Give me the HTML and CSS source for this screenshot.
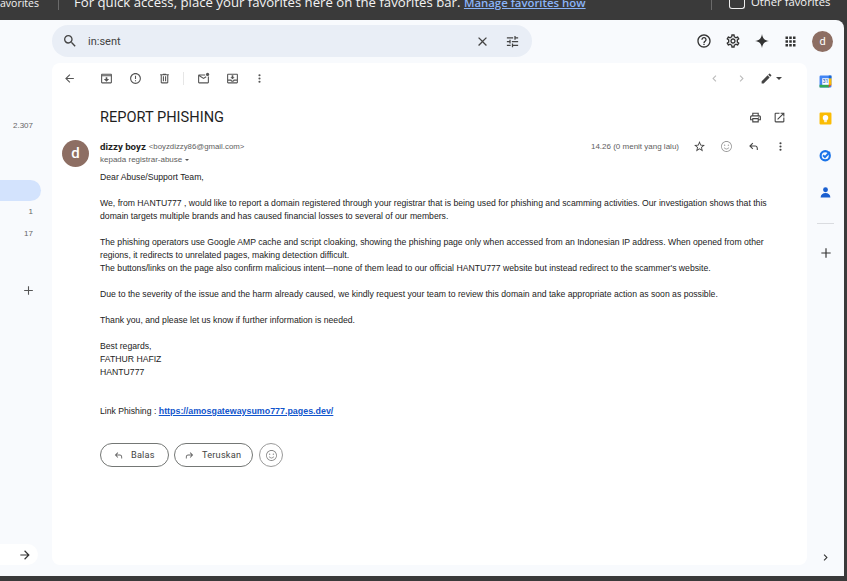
FILE: index.html
```html
<!DOCTYPE html>
<html>
	<head>
		<meta charset="utf-8">
		<title>REPORT PHISHING</title>
		<link rel="stylesheet" href="styles.css">
	</head>
	<body>
		<svg class="defs" width="0" height="0">
			<symbol id="i-search" viewBox="0 0 24 24"><path d="M15.5 14h-.79l-.28-.27A6.471 6.471 0 0 0 16 9.5 6.5 6.5 0 1 0 9.5 16c1.61 0 3.09-.59 4.23-1.57l.27.28v.79l5 4.99L20.49 19l-4.99-5zm-6 0C7.01 14 5 11.99 5 9.5S7.01 5 9.5 5 14 7.01 14 9.5 11.99 14 9.5 14z"/></symbol>
			<symbol id="i-close" viewBox="0 0 24 24"><path d="M19 6.41L17.59 5 12 10.59 6.41 5 5 6.41 10.59 12 5 17.59 6.41 19 12 13.41 17.59 19 19 17.59 13.41 12z"/></symbol>
			<symbol id="i-tune" viewBox="0 0 24 24"><path d="M3 17v2h6v-2H3zM3 5v2h10V5H3zm10 16v-2h8v-2h-8v-2h-2v6h2zM7 9v2H3v2h4v2h2V9H7zm14 4v-2H11v2h10zm-6-4h2V7h4V5h-4V3h-2v6z"/></symbol>
			<symbol id="i-help" viewBox="0 0 24 24"><path d="M11 18h2v-2h-2v2zm1-16C6.48 2 2 6.48 2 12s4.48 10 10 10 10-4.48 10-10S17.52 2 12 2zm0 18c-4.41 0-8-3.59-8-8s3.59-8 8-8 8 3.59 8 8-3.59 8-8 8zm0-14c-2.21 0-4 1.79-4 4h2c0-1.1.9-2 2-2s2 .9 2 2c0 2-3 1.75-3 5h2c0-2.25 3-2.5 3-5 0-2.21-1.79-4-4-4z"/></symbol>
			<symbol id="i-gear" viewBox="0 0 24 24"><path fill-rule="evenodd" d="M19.43 12.98c.04-.32.07-.64.07-.98s-.03-.66-.07-.98l2.11-1.65c.19-.15.24-.42.12-.64l-2-3.46c-.12-.22-.39-.3-.61-.22l-2.49 1c-.52-.4-1.08-.73-1.69-.98l-.38-2.65A.49.49 0 0 0 14 2h-4c-.25 0-.46.18-.49.42l-.38 2.65c-.61.25-1.17.59-1.69.98l-2.49-1c-.23-.09-.49 0-.61.22l-2 3.46c-.13.22-.07.49.12.64l2.11 1.65c-.04.32-.07.65-.07.98s.03.66.07.98l-2.11 1.65c-.19.15-.24.42-.12.64l2 3.46c.12.22.39.3.61.22l2.49-1c.52.4 1.08.73 1.69.98l.38 2.65c.03.24.24.42.49.42h4c.25 0 .46-.18.49-.42l.38-2.65c.61-.25 1.17-.59 1.69-.98l2.49 1c.23.09.49 0 .61-.22l2-3.46c.12-.22.07-.49-.12-.64l-2.11-1.65zM17.45 11.27c.04.31.05.52.05.73s-.02.43-.05.73l-.14 1.13.89.7 1.08.84-.7 1.21-1.27-.51-1.04-.42-.9.68c-.43.32-.84.56-1.25.73l-1.06.43-.16 1.13-.2 1.35h-1.4l-.19-1.35-.16-1.13-1.06-.43c-.43-.18-.83-.41-1.23-.71l-.91-.7-1.06.43-1.27.51-.7-1.21 1.08-.84.89-.7-.14-1.13c-.03-.31-.05-.54-.05-.74s.02-.43.05-.73l.14-1.13-.89-.7-1.08-.84.7-1.21 1.27.51 1.04.42.9-.68c.43-.32.84-.56 1.25-.73l1.06-.43.16-1.13.2-1.35h1.39l.19 1.35.16 1.13 1.06.43c.43.18.83.41 1.23.71l.91.7 1.06-.43 1.27-.51.7 1.21-1.07.85-.89.7.14 1.13zM12 8c-2.21 0-4 1.79-4 4s1.79 4 4 4 4-1.79 4-4-1.79-4-4-4zm0 6c-1.1 0-2-.9-2-2s.9-2 2-2 2 .9 2 2-.9 2-2 2z"/></symbol>
			<symbol id="i-spark" viewBox="0 0 24 24"><path d="M12 1.5C12.9 8 16 11.1 22.5 12 16 12.9 12.9 16 12 22.5 11.1 16 8 12.9 1.5 12 8 11.1 11.1 8 12 1.5z"/></symbol>
			<symbol id="i-apps" viewBox="0 0 24 24"><path d="M4 4h4v4H4zM10 4h4v4h-4zM16 4h4v4h-4zM4 10h4v4H4zM10 10h4v4h-4zM16 10h4v4h-4zM4 16h4v4H4zM10 16h4v4h-4zM16 16h4v4h-4z"/></symbol>
			<symbol id="i-back" viewBox="0 0 24 24"><path d="M20 11H7.83l5.59-5.59L12 4l-8 8 8 8 1.41-1.41L7.83 13H20v-2z"/></symbol>
			<symbol id="i-forward" viewBox="0 0 24 24"><path d="M4 11h12.17l-5.59-5.59L12 4l8 8-8 8-1.41-1.41L16.17 13H4v-2z"/></symbol>
			<symbol id="i-archive" viewBox="0 0 24 24"><path d="M20 3H4c-1.1 0-2 .9-2 2v14c0 1.1.9 2 2 2h16c1.1 0 2-.9 2-2V5c0-1.100-.9-2-2-2zm0 16H4V8h16v11zM4 6V5h16v1H4zm8 12l5-5h-3.500V9.500h-3V13H7l5 5z"/></symbol>
			<symbol id="i-report" viewBox="0 0 24 24"><path d="M12 2C6.480 2 2 6.480 2 12s4.480 10 10 10 10-4.480 10-10S17.520 2 12 2zm0 18c-4.410 0-8-3.590-8-8s3.590-8 8-8 8 3.590 8 8-3.590 8-8 8zm-1-5h2v2h-2v-2zm0-8h2v6h-2V7z"/></symbol>
			<symbol id="i-trash" viewBox="0 0 24 24"><path d="M15 4V3H9v1H4v2h1v13c0 1.100.9 2 2 2h10c1.100 0 2-.9 2-2V6h1V4h-5zm2 15H7V6h10v13zM9 8h2v9H9V8zm4 0h2v9h-2V8z"/></symbol>
			<symbol id="i-mail" viewBox="0 0 24 24"><path d="M20 8.500V19H4V8l8 5 5.500-3.400-1-1.700L12 10.700 5.500 6.500H15v-2H4c-1.100 0-2 .9-2 2v12.500c0 1.100.9 2 2 2h16c1.100 0 2-.9 2-2V8.500h-2z"/><circle cx="19.500" cy="4.500" r="3"/></symbol>
			<symbol id="i-move" viewBox="0 0 24 24"><path d="M20 3H4c-1.100 0-2 .9-2 2v14c0 1.100.9 2 2 2h16c1.100 0 2-.9 2-2V5c0-1.100-.9-2-2-2zm0 16H4v-3h4.500c.7 1.200 2 2 3.500 2s2.800-.8 3.500-2H20v3zm0-5h-6c0 1.100-.9 2-2 2s-2-.9-2-2H4V5h16v9zm-8-.5l4-4h-2.500V6h-3v3.500H8l4 4z"/></symbol>
			<symbol id="i-dots" viewBox="0 0 24 24"><path d="M12 8a2 2 0 1 0 0-4 2 2 0 0 0 0 4zm0 2a2 2 0 1 0 0 4 2 2 0 0 0 0-4zm0 6a2 2 0 1 0 0 4 2 2 0 0 0 0-4z"/></symbol>
			<symbol id="i-left" viewBox="0 0 24 24"><path d="M15.410 7.410L14 6l-6 6 6 6 1.410-1.410L10.830 12z"/></symbol>
			<symbol id="i-right" viewBox="0 0 24 24"><path d="M8.590 16.590L10 18l6-6-6-6-1.410 1.410L13.170 12z"/></symbol>
			<symbol id="i-pencil" viewBox="0 0 24 24"><path d="M3 17.250V21h3.750L17.810 9.940l-3.750-3.750L3 17.250zM20.710 7.040a1 1 0 0 0 0-1.410l-2.340-2.340a1 1 0 0 0-1.410 0l-1.830 1.830 3.750 3.750 1.830-1.830z"/></symbol>
			<symbol id="i-print" viewBox="0 0 24 24"><path d="M19 8h-1V3H6v5H5c-1.660 0-3 1.340-3 3v6h4v4h12v-4h4v-6c0-1.660-1.340-3-3-3zM8 5h8v3H8V5zm8 14H8v-4h8v4zm4-4h-2v-2H6v2H4v-4c0-.55.45-1 1-1h14c.55 0 1 .45 1 1v4z"/><circle cx="18" cy="11.500" r="1"/></symbol>
			<symbol id="i-open" viewBox="0 0 24 24"><path d="M19 19H5V5h7V3H5a2 2 0 0 0-2 2v14a2 2 0 0 0 2 2h14c1.100 0 2-.9 2-2v-7h-2v7zM14 3v2h3.590l-9.830 9.830 1.410 1.410L19 6.410V10h2V3h-7z"/></symbol>
			<symbol id="i-star" viewBox="0 0 24 24"><path d="M22 9.240l-7.190-.62L12 2 9.190 8.630 2 9.240l5.460 4.730L5.820 21 12 17.270 18.180 21l-1.630-7.030L22 9.240zM12 15.400l-3.760 2.270 1-4.280-3.320-2.880 4.380-.38L12 6.100l1.710 4.040 4.380.38-3.320 2.880 1 4.280L12 15.400z"/></symbol>
			<symbol id="i-smile" viewBox="0 0 24 24"><path d="M12 2C6.480 2 2 6.480 2 12s4.480 10 10 10 10-4.480 10-10S17.520 2 12 2zm0 18.500c-4.690 0-8.500-3.810-8.500-8.500S7.310 3.500 12 3.500s8.500 3.810 8.500 8.500-3.810 8.500-8.500 8.500z"/><circle cx="8.500" cy="9.500" r="1.300"/><circle cx="15.500" cy="9.500" r="1.300"/><path d="M7 14h1.600c.6 1.300 1.900 2.200 3.400 2.200s2.800-.9 3.400-2.200H17c-.7 2.100-2.700 3.500-5 3.500S7.700 16.100 7 14z"/></symbol>
			<symbol id="i-reply" viewBox="0 0 24 24"><path d="M20 18.500h-2V15c0-1.700-1.300-3-3-3H7.830l3.580 3.590L10 17l-6-6 6-6 1.410 1.410L7.830 10H15c2.800 0 5 2.200 5 5v3.500z"/></symbol>
			<symbol id="i-fwd" viewBox="0 0 24 24"><path d="M4 18.500h2V15c0-1.700 1.300-3 3-3h7.170l-3.580 3.590L14 17l6-6-6-6-1.410 1.410L16.170 10H9c-2.800 0-5 2.200-5 5v3.500z"/></symbol>
			<symbol id="i-plus" viewBox="0 0 24 24"><path d="M20 13h-7v7h-2v-7H4v-2h7V4h2v7h7v2z"/></symbol>
		</svg>

		<div class="favbar">
			<span class="fav-cut">avorites</span>
			<span class="fav-sep"></span>
			<span class="fav-msg">For quick access, place your favorites here on the favorites bar. <a href="#">Manage favorites how</a></span>
			<span class="fav-sep"></span>
			<span class="fav-box"></span>
			<span class="fav-other">Other favorites</span>
		</div>

		<div class="window">
			<div class="side">
				<div class="count count-sent">2.307</div>
				<div class="side-pill"></div>
				<div class="count count-one">1</div>
				<div class="count count-two">17</div>
				<svg class="side-plus"><use href="#i-plus"/></svg>
				<div class="side-next"><svg><use href="#i-forward"/></svg></div>
			</div>

			<div class="center">
				<div class="topbar">
					<div class="search">
						<svg class="search-icon"><use href="#i-search"/></svg>
						<span class="search-text">in:sent</span>
						<svg class="search-close"><use href="#i-close"/></svg>
						<svg class="search-tune"><use href="#i-tune"/></svg>
					</div>
					<div class="account">
						<svg><use href="#i-help"/></svg>
						<svg><use href="#i-gear"/></svg>
						<svg><use href="#i-spark"/></svg>
						<svg><use href="#i-apps"/></svg>
						<span class="avatar-small">d</span>
					</div>
				</div>

				<div class="card">
					<div class="toolbar">
						<span class="tool tool-back"><svg><use href="#i-back"/></svg></span>
						<span class="tool"><svg><use href="#i-archive"/></svg></span>
						<span class="tool"><svg><use href="#i-report"/></svg></span>
						<span class="tool"><svg><use href="#i-trash"/></svg></span>
						<span class="tool-sep"></span>
						<span class="tool"><svg><use href="#i-mail"/></svg></span>
						<span class="tool"><svg><use href="#i-move"/></svg></span>
						<span class="tool tool-dots"><svg><use href="#i-dots"/></svg></span>
						<span class="pager">
							<svg class="pager-off"><use href="#i-left"/></svg>
							<svg class="pager-off pager-next"><use href="#i-right"/></svg>
							<svg class="pager-pen"><use href="#i-pencil"/></svg>
							<span class="caret"></span>
						</span>
					</div>

					<div class="subject-row">
						<h1 class="subject">REPORT PHISHING</h1>
						<svg><use href="#i-print"/></svg>
						<svg><use href="#i-open"/></svg>
					</div>

					<div class="message">
						<div class="avatar">d</div>
						<div class="message-main">
							<div class="sender-row">
								<span class="sender">dizzy boyz</span>
								<span class="email">&lt;boyzdizzy86@gmail.com&gt;</span>
								<span class="when">14.26 (0 menit yang lalu)</span>
								<span class="actions">
									<svg><use href="#i-star"/></svg>
									<svg class="act-smile"><use href="#i-smile"/></svg>
									<svg><use href="#i-reply"/></svg>
									<svg><use href="#i-dots"/></svg>
								</span>
							</div>
							<div class="to-row">kepada registrar-abuse <span class="caret caret-small"></span></div>

							<div class="body">
								<p>Dear Abuse/Support Team,</p>
								<p>We, from HANTU777 , would like to report a domain registered through your registrar that is being used for phishing and scamming activities. Our investigation shows that this<br>domain targets multiple brands and has caused financial losses to several of our members.</p>
								<p>The phishing operators use Google AMP cache and script cloaking, showing the phishing page only when accessed from an Indonesian IP address. When opened from other<br>regions, it redirects to unrelated pages, making detection difficult.<br>The buttons/links on the page also confirm malicious intent—none of them lead to our official HANTU777 website but instead redirect to the scammer's website.</p>
								<p>Due to the severity of the issue and the harm already caused, we kindly request your team to review this domain and take appropriate action as soon as possible.</p>
								<p>Thank you, and please let us know if further information is needed.</p>
								<p>Best regards,<br>FATHUR HAFIZ<br>HANTU777</p>
								<p class="link-line">Link Phishing : <a href="#">https://amosgatewaysumo777.pages.dev/</a></p>
							</div>

							<div class="buttons">
								<span class="btn btn-reply"><svg><use href="#i-reply"/></svg>Balas</span>
								<span class="btn btn-fwd"><svg><use href="#i-fwd"/></svg>Teruskan</span>
								<span class="btn-emoji"><svg><use href="#i-smile"/></svg></span>
							</div>
						</div>
					</div>
				</div>
			</div>

			<div class="rail">
				<svg class="app" viewBox="0 0 24 24">
					<rect x="1" y="1" width="22" height="22" rx="2" fill="#4285f4"/>
					<rect x="1" y="18" width="18" height="5" fill="#34a853"/>
					<rect x="18" y="6" width="5" height="13" fill="#fbbc04"/>
					<rect x="18" y="1" width="5" height="5" fill="#1967d2"/>
					<path d="M18 18h5l-5 5z" fill="#ea4335"/>
					<rect x="6" y="6" width="12" height="12" fill="#fff"/>
					<text x="12" y="15.500" class="cal-num">31</text>
				</svg>
				<svg class="app" viewBox="0 0 24 24">
					<rect x="1" y="1" width="22" height="22" rx="2" fill="#fbbc04"/>
					<circle cx="12" cy="10.500" r="5" fill="#fff"/>
					<rect x="9" y="13" width="6" height="3" fill="#fff"/>
					<rect x="9.500" y="17" width="5" height="1.800" fill="#fff"/>
				</svg>
				<svg class="app" viewBox="0 0 24 24">
					<circle cx="11.500" cy="12.500" r="8.500" fill="none" stroke="#1a73e8" stroke-width="4"/>
					<path d="M7.500 11.500l3.500 3.500 9-9.500" fill="none" stroke="#1a73e8" stroke-width="3.500"/>
				</svg>
				<svg class="app" viewBox="0 0 24 24">
					<circle cx="12" cy="7" r="4.500" fill="#1a5fd0"/>
					<path d="M3 21c0-5 4-8 9-8s9 3 9 8z" fill="#1a5fd0"/>
				</svg>
				<span class="rail-sep"></span>
				<svg class="rail-plus"><use href="#i-plus"/></svg>
				<svg class="rail-more"><use href="#i-right"/></svg>
			</div>
		</div>
	</body>
</html>
```

FILE: styles.css
```css
*{
	padding: 0;
	margin: 0;
	box-sizing: border-box;
}
html,body{
	width: 847px;
	height: 581px;
	overflow: hidden;
}
body{
	background: #3a3a3a;
	font-family: "Liberation Sans", Arial, sans-serif;
	color: #222;
}
svg{
	fill: currentColor;
	display: block;
	flex: none;
}
.defs{
	position: absolute;
}

/* favorites bar */
.favbar{
	height: 20px;
	display: flex;
	align-items: flex-start;
	overflow: hidden;
	color: #f3f3f3;
	font-family: "Open Sans", sans-serif;
	white-space: nowrap;
}
.fav-cut{
	width: 58px;
	font-size: 10.5px;
	line-height: 14px;
	margin-top: -4px;
}
.fav-sep{
	width: 1px;
	height: 10px;
	background: #6a6a6a;
}
.fav-msg{
	width: 652px;
	padding-left: 15px;
	font-size: 13.2px;
	line-height: 18px;
	margin-top: -7px;
}
.fav-msg a{
	color: #8ab4f8;
	font-size: 11.4px;
	font-weight: 600;
}
.fav-box{
	width: 16px;
	height: 9px;
	margin: 0 6px 0 17px;
	border: 1px solid #eee;
	border-top: 0;
	border-radius: 0 0 3px 3px;
}
.fav-other{
	font-size: 11.3px;
	line-height: 14px;
	margin-top: -5px;
}

/* window */
.window{
	width: 844px;
	height: 556px;
	background: #f8fafd;
	border-radius: 0 8px 0 0;
	display: flex;
}
.side{
	width: 52px;
	display: flex;
	flex-direction: column;
	align-items: flex-end;
	font-size: 8px;
	color: #666;
}
.count{
	line-height: 10px;
	padding-right: 19px;
}
.count-sent{
	margin-top: 101px;
}
.side-pill{
	width: 41px;
	height: 21px;
	margin: 49px 11px 0 0;
	background: #d3e3fd;
	border-radius: 0 11px 11px 0;
}
.count-one{
	margin-top: 6px;
}
.count-two{
	margin-top: 12px;
}
.side-plus{
	width: 13px;
	height: 13px;
	margin: 45px 17px 0 0;
	color: #555;
}
.side-next{
	width: 38px;
	height: 21px;
	margin: auto 14px 11px 0;
	background: #fff;
	border-radius: 0 11px 11px 0;
	padding: 4px 0 0 18px;
	color: #333;
}
.side-next svg{
	width: 14px;
	height: 14px;
}
.center{
	width: 755px;
	display: flex;
	flex-direction: column;
}
.topbar{
	height: 43px;
	padding-top: 5px;
	display: flex;
	align-items: flex-start;
}
.search{
	width: 480px;
	height: 32px;
	flex: none;
	background: #e9eef6;
	border-radius: 16px;
	display: flex;
	align-items: center;
	color: #444;
}
.search-icon{
	width: 16px;
	height: 16px;
	margin-left: 10px;
}
.search-text{
	font-family: "Roboto", sans-serif;
	font-size: 11px;
	margin-left: 10px;
	color: #444;
	flex: 1;
}
.search-close{
	width: 15px;
	height: 15px;
	margin-right: 15px;
}
.search-tune{
	width: 15px;
	height: 15px;
	margin-right: 12px;
}
.account{
	display: flex;
	flex: none;
	align-items: center;
	height: 32px;
	margin-left: 164px;
	color: #333;
}
.account svg{
	width: 16px;
	height: 16px;
	margin-right: 13px;
}
.account svg:nth-child(4){
	width: 15px;
	height: 15px;
	margin-right: 14px;
}
.avatar-small{
	width: 21px;
	height: 21px;
	border-radius: 50%;
	background: #8d6e63;
	color: #fff;
	font: 11px/21px "Roboto", sans-serif;
	text-align: center;
}

/* mail card */
.card{
	height: 502px;
	background: #fff;
	border-radius: 8px;
}
.toolbar{
	height: 30px;
	padding-left: 3px;
	display: flex;
	align-items: center;
	color: #555;
}
.tool{
	width: 29px;
	height: 13px;
	display: flex;
	justify-content: center;
}
.tool svg{
	width: 13px;
	height: 13px;
}
.tool-back{
	margin-right: 8px;
}
.tool-sep{
	width: 1px;
	height: 13px;
	margin: 0 5px 0 4px;
	background: #e6e6e6;
}
.tool-dots{
	width: 25px;
}
.pager{
	display: flex;
	align-items: center;
	margin-left: 436px;
}
.pager svg{
	width: 13px;
	height: 13px;
}
.pager-off{
	color: #bbb;
	margin-right: 14px;
}
.pager-next{
	margin-right: 12px;
}
.pager-pen{
	color: #444;
	margin-right: 3px;
}
.caret{
	display: inline-block;
	border-style: solid;
	border-width: 3px 3px 0;
	border-color: #444 transparent transparent;
}
.subject-row{
	height: 24px;
	margin-top: 12px;
	padding: 0 21px 0 48px;
	display: flex;
	align-items: center;
	color: #444;
}
.subject{
	flex: 1;
	font: 400 14.6px/24px "Roboto", sans-serif;
	color: #1f1f1f;
}
.subject-row svg{
	width: 13px;
	height: 13px;
	margin-left: 11px;
}
.message{
	display: flex;
	margin-top: 11px;
	padding-left: 10px;
}
.avatar{
	width: 27px;
	height: 27px;
	border-radius: 50%;
	background: #8d6e63;
	color: #fff;
	font: 500 15px/27px "Roboto", sans-serif;
	text-align: center;
	flex: none;
}
.message-main{
	width: 687px;
	margin-left: 11px;
}
.sender-row{
	height: 13px;
	display: flex;
	align-items: center;
	white-space: nowrap;
}
.sender{
	font: 700 9.7px/13px "Roboto", sans-serif;
	color: #1f1f1f;
}
.email{
	font-size: 7.8px;
	color: #5e5e5e;
	margin-left: 3px;
	flex: 1;
}
.when{
	font-size: 8px;
	color: #5e5e5e;
}
.actions{
	display: flex;
	color: #444;
	width: 108px;
	padding-left: 14px;
	justify-content: space-between;
}
.actions svg{
	width: 13px;
	height: 13px;
}
.act-smile{
	color: #999;
}
.to-row{
	font-size: 8px;
	line-height: 13px;
	color: #5e5e5e;
}
.caret-small{
	margin: 0 0 1px 0;
	border-width: 2.5px 2.5px 0;
	border-color: #555 transparent transparent;
}
.body{
	margin-top: 5px;
	font-size: 8.67px;
	line-height: 13px;
	color: #222;
	white-space: nowrap;
}
.body p{
	margin-bottom: 13px;
}
.link-line{
	margin-top: 26px;
}
.link-line a{
	color: #1155cc;
	font-weight: 700;
	font-size: 8.9px;
}
.buttons{
	display: flex;
	align-items: center;
	margin-top: 25px;
}
.btn{
	height: 24px;
	border: 1px solid #747775;
	border-radius: 12px;
	display: flex;
	align-items: center;
	font: 9.2px/22px "Roboto", sans-serif;
	letter-spacing: 0.2px;
	color: #444;
}
.btn svg{
	width: 11px;
	height: 11px;
	margin-right: 7px;
	color: #666;
}
.btn-reply{
	width: 69px;
	padding-left: 12px;
}
.btn-fwd{
	width: 79px;
	margin-left: 5px;
	padding-left: 9px;
}
.btn-emoji{
	width: 24px;
	height: 24px;
	margin-left: 6px;
	border: 1px solid #9a9a9a;
	border-radius: 50%;
	display: flex;
	align-items: center;
	justify-content: center;
	color: #888;
}
.btn-emoji svg{
	width: 13px;
	height: 13px;
}

/* right rail */
.rail{
	width: 37px;
	display: flex;
	flex-direction: column;
	align-items: center;
}
.app{
	width: 13px;
	height: 13px;
	margin-top: 24px;
}
.app:first-child{
	margin-top: 55px;
}
.cal-num{
	font: 700 9px "Roboto", sans-serif;
	fill: #4a78c8;
	text-anchor: middle;
}
.rail-sep{
	width: 17px;
	height: 1px;
	margin-top: 24px;
	background: #dadce0;
}
.rail-plus{
	width: 14px;
	height: 14px;
	margin-top: 22px;
	color: #333;
}
.rail-more{
	width: 13px;
	height: 13px;
	margin-top: auto;
	margin-bottom: 12px;
	color: #333;
}
```
